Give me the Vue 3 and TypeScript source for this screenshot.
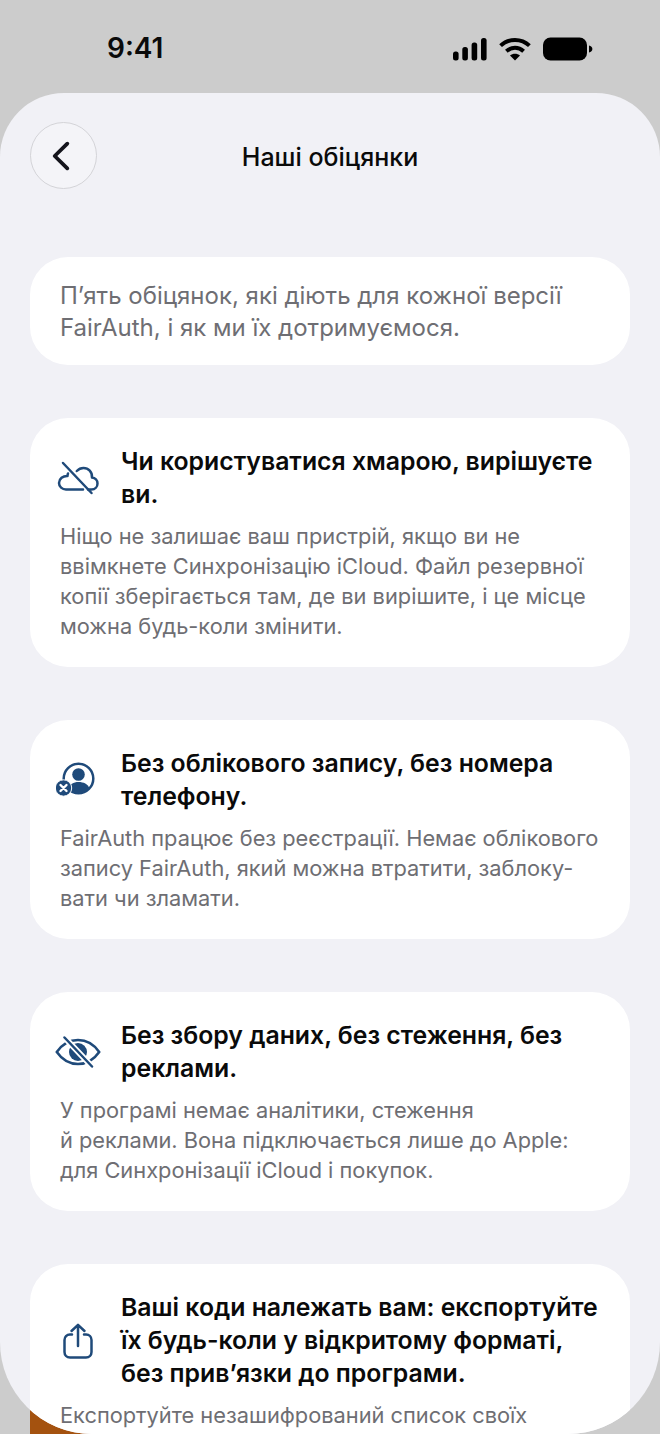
<script setup lang="ts">
interface Pledge {
  icon: 'cloud' | 'user' | 'eye' | 'share'
  title: string
  body: string
}

const pledges: Pledge[] = [
  {
    icon: 'cloud',
    title: 'Чи користуватися хмарою, вирішуєте\nви.',
    body: 'Ніщо не залишає ваш пристрій, якщо ви не\nввімкнете Синхронізацію iCloud. Файл резервної\nкопії зберігається там, де ви вирішите, і це місце\nможна будь-коли змінити.',
  },
  {
    icon: 'user',
    title: 'Без облікового запису, без номера\nтелефону.',
    body: 'FairAuth працює без реєстрації. Немає облікового\nзапису FairAuth, який можна втратити, заблоку-\nвати чи зламати.',
  },
  {
    icon: 'eye',
    title: 'Без збору даних, без стеження, без\nреклами.',
    body: 'У програмі немає аналітики, стеження\nй реклами. Вона підключається лише до Apple:\nдля Синхронізації iCloud і покупок.',
  },
  {
    icon: 'share',
    title: 'Ваші коди належать вам: експортуйте\nїх будь-коли у відкритому форматі,\nбез прив’язки до програми.',
    body: 'Експортуйте незашифрований список своїх',
  },
]
</script>

<template>
  <div class="screen">
    <div class="peek"></div>
    <header class="status">
      <span class="time">9:41</span>
      <div class="status-icons">
        <svg width="34" height="24" viewBox="0 0 34 24" fill="#000">
          <rect x="0" y="14.500" width="5.600" height="9" rx="2.500" />
          <rect x="9.300" y="10" width="5.600" height="13.500" rx="2.500" />
          <rect x="18.600" y="5.500" width="5.600" height="18" rx="2.500" />
          <rect x="28" y="1" width="5.600" height="22.500" rx="2.500" />
        </svg>
        <svg width="32" height="24" viewBox="0 0 32 24" fill="none" stroke="#000" stroke-width="4">
          <path d="M1.600 8.600C9.600 1 22.400 1 30.400 8.600" />
          <path d="M7.400 14.200C12.400 9.600 19.600 9.600 24.600 14.200" />
          <path d="M16 23.600l-5-5c2.800-2.400 7.200-2.400 10 0z" fill="#000" stroke="none" />
        </svg>
        <svg width="50" height="24" viewBox="0 0 50 24" fill="#000">
          <rect x="0" y="0.500" width="44" height="23" rx="7.500" />
          <path d="M46 8.500c2 .4 3.400 1.800 3.400 3.500S48 15.100 46 15.500z" />
        </svg>
      </div>
    </header>

    <main class="sheet">
      <div class="nav">
        <button class="back" aria-label="Назад">
          <svg width="20" height="32" viewBox="0 0 20 32" fill="none" stroke="#14141c" stroke-width="3.800" stroke-linecap="round" stroke-linejoin="round">
            <path d="M16.300 3.700 3.700 16 16.300 28.300" />
          </svg>
        </button>
        <h1 class="nav-title">Наші обіцянки</h1>
      </div>

      <p class="intro">П’ять обіцянок, які діють для кожної версії<br />FairAuth, і як ми їх дотримуємося.</p>

      <section v-for="item in pledges" :key="item.icon" class="card">
        <div class="card-head">
          <span class="icon">
            <svg v-if="item.icon === 'cloud'" width="42" height="34" viewBox="0 0 42 34" fill="none" stroke="#1f4a7a" stroke-width="2.500" stroke-linecap="round" stroke-linejoin="round">
              <path d="M31 28.500h3.500c3.600 0 6-2.800 6-6 0-3.300-2.400-5.700-5.500-6 .4-5.500-3.600-9.500-8.500-9.500-2.700 0-5 1.200-6.700 3" />
              <path d="M11 12.500C10.700 13.300 10.500 14.100 10.500 15 6 14.800 2 17.800 2 22c0 3.800 3.300 6.500 7 6.500h17" />
              <path d="M6 2 34.500 32" />
            </svg>
            <svg v-else-if="item.icon === 'user'" width="44" height="36" viewBox="0 0 44 36">
              <circle cx="22.500" cy="16.500" r="14.800" fill="none" stroke="#1f4a7a" stroke-width="2.500" />
              <circle cx="22.500" cy="12.500" r="6.300" fill="#1f4a7a" />
              <path d="M12 27c1.500-5 5.500-7 10.500-7s9.500 2 11 6.500c-3 3-7 5-11.500 5-4 0-7.500-1.500-10-4.500z" fill="#1f4a7a" />
              <circle cx="7.500" cy="26" r="8.200" fill="#1f4a7a" stroke="#fff" stroke-width="1" />
              <path d="M4.500 23l6 6m0-6-6 6" stroke="#fff" stroke-width="2.400" stroke-linecap="round" />
            </svg>
            <svg v-else-if="item.icon === 'eye'" width="46" height="32" viewBox="0 0 46 32" fill="none" stroke="#1f4a7a" stroke-width="2.500" stroke-linecap="round">
              <path d="M1.800 16C7 8.500 14.500 4 23 4s16 4.500 21.200 12C39 23.500 31.500 28 23 28S7 23.500 1.800 16z" />
              <circle cx="23" cy="16" r="9" fill="#1f4a7a" stroke="none" />
              <path d="M9.500 1.500 37 30.500" stroke="#fff" stroke-width="6" />
              <path d="M9.500 1.500 37 30.500" />
            </svg>
            <svg v-else width="30" height="36" viewBox="0 0 30 36" fill="none" stroke="#1f4a7a" stroke-width="2.500" stroke-linecap="round" stroke-linejoin="round">
              <path d="M9 11.500H7c-3.300 0-5.500 2.200-5.500 5.500v12c0 3.300 2.200 5.500 5.500 5.500h16c3.300 0 5.500-2.200 5.500-5.500V17c0-3.300-2.200-5.500-5.500-5.500h-2" />
              <path d="M15 23V2M8.500 8 15 1.800 21.500 8" />
            </svg>
          </span>
          <h2 class="card-title">{{ item.title }}</h2>
        </div>
        <p class="card-body">{{ item.body }}</p>
      </section>
    </main>
  </div>
</template>

<style>
html,
body {
  margin: 0;
  overflow: hidden;
}
</style>

<style scoped>
.screen {
  position: relative;
  width: 660px;
  height: 1434px;
  overflow: hidden;
  background: #cccccc;
  font-family: Inter, "Noto Sans", sans-serif;
  display: flex;
  flex-direction: column;
}

.peek {
  position: absolute;
  left: 30px;
  bottom: 0;
  width: 62px;
  height: 40px;
  background: #a4520f;
}

.status {
  height: 93px;
  flex: none;
  display: flex;
  justify-content: space-between;
  padding: 31px 67px 0 107px;
  box-sizing: border-box;
}

.time {
  font-size: 28px;
  line-height: 34px;
  font-weight: 600;
  color: #0a0a0a;
}

.status-icons {
  display: flex;
  align-items: flex-start;
  gap: 12px;
  padding-top: 6px;
}

.sheet {
  position: relative;
  flex: 1;
  min-height: 0;
  overflow: hidden;
  background: #f1f1f6;
  border-radius: 64px 64px 92px 92px;
  padding: 29px 30px 0;
  box-sizing: border-box;
}

.nav {
  position: relative;
  height: 67px;
  display: flex;
  align-items: center;
  justify-content: center;
  margin-bottom: 68px;
}

.back {
  position: absolute;
  left: 0;
  top: 0;
  width: 67px;
  height: 67px;
  padding: 0 5px 0 0;
  display: flex;
  align-items: center;
  justify-content: center;
  border-radius: 50%;
  border: 1px solid #d3d3d7;
  background: #f4f4f8;
}

.nav-title {
  margin: 2px 0 0;
  font-size: 25px;
  line-height: 30px;
  font-weight: 500;
  color: #0a0a0a;
}

.intro {
  margin: 0 0 53px;
  padding: 23px 30px 21px;
  background: #fff;
  border-radius: 38px;
  font-size: 24px;
  line-height: 32px;
  color: #6e6e73;
}

.card {
  background: #fff;
  border-radius: 38px;
  padding: 27px 30px 26px;
  margin-bottom: 53px;
}

.card-head {
  display: flex;
  align-items: center;
  margin-bottom: 10px;
}

.icon {
  flex: none;
  width: 60px;
  margin-left: -12px;
  margin-right: 13px;
  display: flex;
  justify-content: center;
}

.card-title {
  margin: 0;
  font-size: 24.800px;
  line-height: 33px;
  font-weight: 600;
  color: #0a0a0a;
  white-space: pre-line;
}

.card-body {
  margin: 0;
  font-size: 21.800px;
  line-height: 30px;
  color: #6e6e73;
  white-space: pre-line;
}
</style>
